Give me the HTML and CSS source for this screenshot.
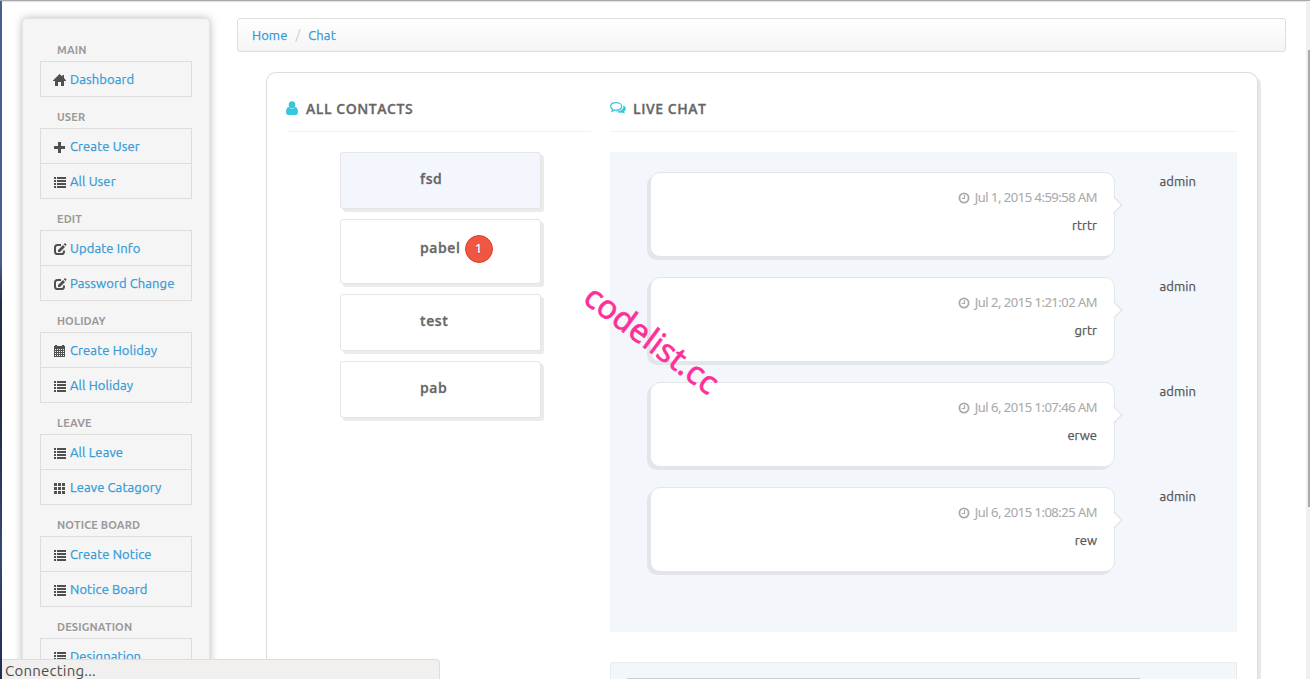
FILE: index.html
```html
<!DOCTYPE html>
<html lang="en">
<head>
<meta charset="utf-8">
<title>Chat</title>
<link rel="stylesheet" href="styles.css">
</head>
<body>
<svg class="defs" width="0" height="0">
  <symbol id="home" viewBox="0 0 14 14"><path d="M6.500 1 0 7.400V8H2V13H5V9H8V13H11V8H13V7.400L11 5V2H9.400V3.400Z"/></symbol>
  <symbol id="plus" viewBox="0 0 14 14"><path d="M5 2h3v4h4v3h-4v4h-3V9h-4V6h4z"/></symbol>
  <symbol id="list" viewBox="0 0 14 14"><path d="M1 2h2v2H1zM4 2h9v2H4zM1 5h2v2H1zM4 5h9v2H4zM1 8h2v2H1zM4 8h9v2H4zM1 11h2v2H1zM4 11h9v2H4z"/></symbol>
  <symbol id="edit" viewBox="0 0 14 14"><path d="M8 3H4.600Q2 3 2 5.600V9.400Q2 12 4.600 12H8.400Q11 12 11 9.400V8.600" fill="none" stroke="currentColor" stroke-width="2"/><path d="M5 10V7.900L10 2.900 12 4.900 7 10zM10.700 2.200 12 1 13.600 2.600 12.600 4z"/></symbol>
  <symbol id="calendar" viewBox="0 0 14 14"><path fill-rule="evenodd" d="M1 2h1V1h2v1h5V1h2v1h1v11H1zM2 5v1h1V5zM4 5v1h1V5zM6 5v1h1V5zM8 5v1h1V5zM10 5v1h1V5zM2 7v1h1V7zM4 7v1h1V7zM6 7v1h1V7zM8 7v1h1V7zM10 7v1h1V7zM2 9v1h1V9zM4 9v1h1V9zM6 9v1h1V9zM8 9v1h1V9zM10 9v1h1V9zM2 11v1h1v-1zM4 11v1h1v-1zM6 11v1h1v-1zM8 11v1h1v-1zM10 11v1h1v-1z"/></symbol>
  <symbol id="grid" viewBox="0 0 14 14"><path d="M1 2h3v3H1zM5 2h3v3H5zM9 2h3v3H9zM1 6h3v3H1zM5 6h3v3H5zM9 6h3v3H9zM1 10h3v3H1zM5 10h3v3H5zM9 10h3v3H9z"/></symbol>
  <symbol id="clock" viewBox="0 0 12 12"><circle cx="6" cy="6" r="4.600" fill="none" stroke="currentColor" stroke-width="1.800"/><path d="M6.500 3v3.500H3.700" fill="none" stroke="currentColor" stroke-width="1.200"/></symbol>
</svg>
<div class="desktop-edge"></div>
<div class="page">
  <nav class="sidebar">
    <h2>Main</h2>
    <ul><li><svg><use href="#home"/></svg><a>Dashboard</a></li></ul>
    <h2>User</h2>
    <ul><li><svg><use href="#plus"/></svg><a>Create User</a></li><li><svg><use href="#list"/></svg><a>All User</a></li></ul>
    <h2>Edit</h2>
    <ul><li><svg><use href="#edit"/></svg><a>Update Info</a></li><li><svg><use href="#edit"/></svg><a>Password Change</a></li></ul>
    <h2>Holiday</h2>
    <ul><li><svg><use href="#calendar"/></svg><a>Create Holiday</a></li><li><svg><use href="#list"/></svg><a>All Holiday</a></li></ul>
    <h2>Leave</h2>
    <ul><li><svg><use href="#list"/></svg><a>All Leave</a></li><li><svg><use href="#grid"/></svg><a>Leave Catagory</a></li></ul>
    <h2>Notice Board</h2>
    <ul><li><svg><use href="#list"/></svg><a>Create Notice</a></li><li><svg><use href="#list"/></svg><a>Notice Board</a></li></ul>
    <h2>Designation</h2>
    <ul><li><svg><use href="#list"/></svg><a>Designation</a></li></ul>
  </nav>
  <main class="content">
    <div class="breadcrumb"><a>Home</a><span class="slash">/</span><a>Chat</a></div>
    <div class="panel">
      <section class="contacts">
        <h3><svg class="user-icon" viewBox="0 0 12 14"><ellipse cx="6" cy="3.900" rx="3.300" ry="3.700"/><path d="M2.600 6C.8 6.300 0 8.400 0 11Q0 14 2.400 14H9.600Q12 14 12 11C12 8.400 11.200 6.300 9.400 6Q8 7.900 6 7.900T2.600 6Z"/></svg><span>All Contacts</span></h3>
        <div class="contact-list">
          <div class="contact active"><b>fsd</b></div>
          <div class="contact unread"><b>pabel</b><span class="badge">1</span></div>
          <div class="contact"><b>test</b></div>
          <div class="contact"><b>pab</b></div>
        </div>
      </section>
      <section class="chat">
        <h3><svg class="chat-icon" viewBox="0 0 16 14"><path d="M6.200 1.700C3.300 1.700.7 3.100.7 5.500Q.7 7.200 2.700 8.400L2 10.200 4.500 9.100C9 9.700 11.700 7.800 11.700 5.500S9.200 1.700 6.200 1.700Z" fill="none" stroke="currentColor" stroke-width="1.300"/><path d="M13.200 4.300C16.600 6 16.400 9.200 14 10.500L15 12.800 12 11.500C9.500 12 7.200 11.600 5.900 10.600 10.500 10.500 14.300 8 13.200 4.300Z"/></svg><span>Live Chat</span></h3>
        <div class="messages">
          <article class="message"><div class="bubble"><time><svg><use href="#clock"/></svg><span>Jul 1, 2015 4:59:58 AM</span></time><p>rtrtr</p></div><span class="author">admin</span></article>
          <article class="message"><div class="bubble"><time><svg><use href="#clock"/></svg><span>Jul 2, 2015 1:21:02 AM</span></time><p>grtr</p></div><span class="author">admin</span></article>
          <article class="message"><div class="bubble"><time><svg><use href="#clock"/></svg><span>Jul 6, 2015 1:07:46 AM</span></time><p>erwe</p></div><span class="author">admin</span></article>
          <article class="message"><div class="bubble"><time><svg><use href="#clock"/></svg><span>Jul 6, 2015 1:08:25 AM</span></time><p>rew</p></div><span class="author">admin</span></article>
        </div>
        <div class="composer"><div class="input"></div></div>
      </section>
    </div>
  </main>
</div>
<div class="scrollbar"></div>
<div class="watermark">codelist.cc</div>
<div class="status">Connecting...</div>
</body>
</html>
```
FILE: styles.css
```css
* { box-sizing: border-box; }
body {
  margin: 0; height: 679px; overflow: hidden; position: relative;
  background: #fff; border-top: 1px solid #a9a9a9;
  box-shadow: inset 0 1px 1px #e2e2e2;
  font: 13px/20px Ubuntu, "Noto Sans", "Open Sans", sans-serif; color: #555;
}
h2, h3, p, ul { margin: 0; padding: 0; }
ul { list-style: none; }
svg { fill: currentColor; flex: none; }
.defs { position: absolute; }
.desktop-edge {
  position: absolute; left: 0; top: 0; width: 2px; height: 678px;
  background: linear-gradient(#485f91 0, #485f91 260px, #252d4a 300px, #20263d 400px, #36487a 550px, #202b50 678px);
}
.page { display: flex; height: 678px; padding: 17px 24px 0 22px; gap: 27px; overflow: hidden; }

.sidebar {
  width: 188px; padding: 16px 17px 0; border: 1px solid #e3e3e3; border-bottom: 0; border-radius: 5px 5px 0 0;
  background: #f5f5f5; box-shadow: 0 0 8px #bbb; flex: none; overflow: hidden;
}
.sidebar h2 {
  height: 31px; padding: 11px 0 0 17px; font-size: 11px; line-height: 18px; font-weight: 700; letter-spacing: .15px;
  color: #999; text-transform: uppercase; text-shadow: 0 1px 0 rgba(255,255,255,.5);
}
.sidebar h2:first-child { height: 26px; padding-top: 6px; }
.sidebar ul { border: 1px solid #ddd; border-top: 0; width: 152px; }
.sidebar li {
  height: 35px; border-top: 1px solid #ddd; padding: 0 0 0 12px; display: flex; align-items: center; gap: 3px;
}
.sidebar li svg { width: 14px; height: 14px; color: #505050; margin-top: 2px; }
.sidebar a, .breadcrumb a { color: #369bd7; letter-spacing: .1px; -webkit-text-stroke: .25px #369bd7; }

.content { width: 1049px; }
.breadcrumb {
  height: 34px; border: 1px solid #ddd; border-radius: 3px; padding: 0 14px;
  background: linear-gradient(#fff, #f5f5f5); display: flex; align-items: center;
}
.slash { color: #ccc; padding: 0 8px; }
.panel {
  margin: 20px 0 0 29px; width: 992px; height: 607px; padding: 20px 20px 0; border: 1px solid #ddd; border-bottom: 0;
  border-radius: 10px 10px 0 0; box-shadow: 3px 3px 0 #e8e8e8; display: flex; gap: 19px;
}
h3 {
  height: 39px; border-bottom: 1px solid #f2f2f2; display: flex; align-items: flex-start;
  font: 600 14px/32px "Open Sans", sans-serif; color: #666; text-transform: uppercase;
  letter-spacing: .55px; -webkit-text-stroke: .3px #666;
}
h3 svg { color: #36c6dd; }
.user-icon { width: 12px; height: 14px; margin: 8px 8px 0 -1px; }
.chat-icon { width: 16px; height: 14px; margin: 8px 7px 0 0; }
.contacts { width: 304px; }
.contact-list { width: 201px; margin: 20px 0 0 53px; display: flex; flex-direction: column; gap: 10px; }
.contact {
  height: 57px; padding: 16px 0 0 79px; border: 1px solid #e5e5e5; border-radius: 3px; background: #fff;
  box-shadow: 3px 3px 0 #ebebeb; display: flex; align-items: flex-start; font: 14px/20px "Open Sans", sans-serif;
}
.contact b { font-weight: 600; color: #666; letter-spacing: .6px; -webkit-text-stroke: .3px #666; }
.active { background: #f3f7fd; }
.unread { height: 65px; gap: 4px; }
.unread b { margin-top: 2px; }
.badge {
  width: 28px; height: 28px; margin-top: -1px; border: 1px solid #e23d28; border-radius: 50%; background: #ef5644;
  color: #fff; text-align: center; font-size: 12px; font-weight: 600; line-height: 26px; text-shadow: 0 1px 1px rgba(0,0,0,.3);
}
.chat { width: 627px; }
.messages { height: 480px; margin-top: 20px; padding: 20px 41px 0 40px; background: #f3f7fc; display: flex; flex-direction: column; gap: 20px; }
.message { display: flex; justify-content: space-between; }
.bubble {
  position: relative; width: 465px; height: 85px; padding: 14px 17px 0; border: 1px solid #e2e5e9; border-radius: 10px;
  background: #fff; box-shadow: -3px 3px 0 #e2e5e9; text-align: right;
}
.bubble::after {
  content: ""; position: absolute; right: -6px; top: 26px; width: 11px; height: 11px; background: #fff;
  border: 1px solid #dcdfe2; border-left: 0; border-bottom: 0; transform: rotate(45deg);
}
time { display: flex; justify-content: flex-end; align-items: center; gap: 5px; color: #aaa; font: 13px/20px "Open Sans", sans-serif; letter-spacing: -.48px; -webkit-text-stroke: .15px #aaa; }
time svg { width: 12px; height: 12px; margin-top: 1px; }
.bubble p { margin-top: 8px; -webkit-text-stroke: .25px #555; }
.author { line-height: 19px; letter-spacing: .1px; -webkit-text-stroke: .25px #555; }
.composer { height: 20px; margin-top: 30px; padding: 15px 96px 0 16px; border: 1px solid #e8eaed; border-bottom: 0; border-radius: 3px 3px 0 0; background: #f3f7fc; overflow: hidden; }
.input { height: 2px; border-top: 1px solid #ccc; background: #fff; }

.scrollbar { position: absolute; right: 0; top: 0; width: 4px; height: 678px; background: #f0f0f0; }
.scrollbar::after { content: ""; position: absolute; right: 0; top: 49px; width: 2px; height: 457px; background: #aaa; }
.watermark {
  position: absolute; left: 552px; top: 318px; width: 200px; text-align: center; font: 32.600px/40px "Noto Sans", sans-serif;
  color: #ff2f99; -webkit-text-stroke: .6px #ff2f99; transform: rotate(36.600deg); white-space: nowrap;
}
.status {
  position: absolute; left: 2px; bottom: 0; width: 438px; height: 20px; padding-left: 3px; line-height: 22px; font-size: 15px;
  letter-spacing: .22px; color: #4c4c4c; background: #f1f0ee; border: solid #ddd; border-width: 1px 1px 0 0; border-radius: 0 4px 0 0;
}
```
